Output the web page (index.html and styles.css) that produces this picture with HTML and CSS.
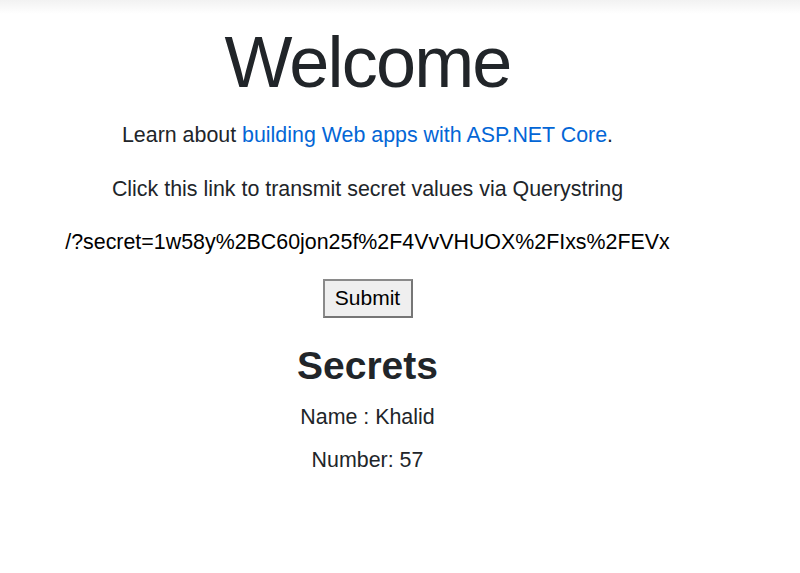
FILE: index.html
```html
<!DOCTYPE html>
<html lang="en">
<head>
    <meta charset="UTF-8"/>
    <meta name="viewport" content="width=device-width, initial-scale=1.0"/>
    <title>Home page</title>
    <link rel="stylesheet" href="styles.css">
</head>
<body>
<div class="topbar"></div>
<div class="main">
    <h1 class="display">Welcome</h1>
    <p>Learn about <a href="#">building Web apps with ASP.NET Core</a>.</p>
    <p>Click this link to transmit secret values via Querystring</p>
    <form>
        <p class="secret">/?secret=1w58y%2BC60jon25f%2F4VvVHUOX%2FIxs%2FEVx</p>
        <button type="button">Submit</button>
    </form>
    <h2>Secrets</h2>
    <p class="item">Name : Khalid</p>
    <p class="item">Number: 57</p>
</div>
</body>
</html>
```
FILE: styles.css
```css
body {
    margin: 0;
    font-family: "Liberation Sans", Arial, sans-serif;
    font-size: 21.4px;
    line-height: 1.5;
    color: #212529;
    background: #fff;
}

.topbar {
    height: 14px;
    background: linear-gradient(#f2f2f2, #fff);
}

.main {
    width: 735px;
    text-align: center;
    padding-top: 5px;
}

.display {
    margin: 0 0 14px;
    font-size: 72px;
    font-weight: 300;
    line-height: 1.2;
    letter-spacing: -1.8px;
}

p {
    margin: 0 0 21px;
}

a {
    color: #0366d6;
    text-decoration: none;
}

form {
    margin: 0;
}

.secret {
    color: #000;
}

button {
    font-family: "Liberation Sans", Arial, sans-serif;
    font-size: 21px;
    color: #000;
    background: #efefef;
    border: 2px solid #767676;
    border-top-color: #8a8a8a;
    border-left-color: #8a8a8a;
    width: 90px;
    height: 39px;
    padding: 0;
    margin: 0;
}

h2 {
    margin: 25px 0 11px;
    font-size: 39px;
    font-weight: 700;
    line-height: 1.2;
}

.item {
    margin: 0 0 11px;
}
```
